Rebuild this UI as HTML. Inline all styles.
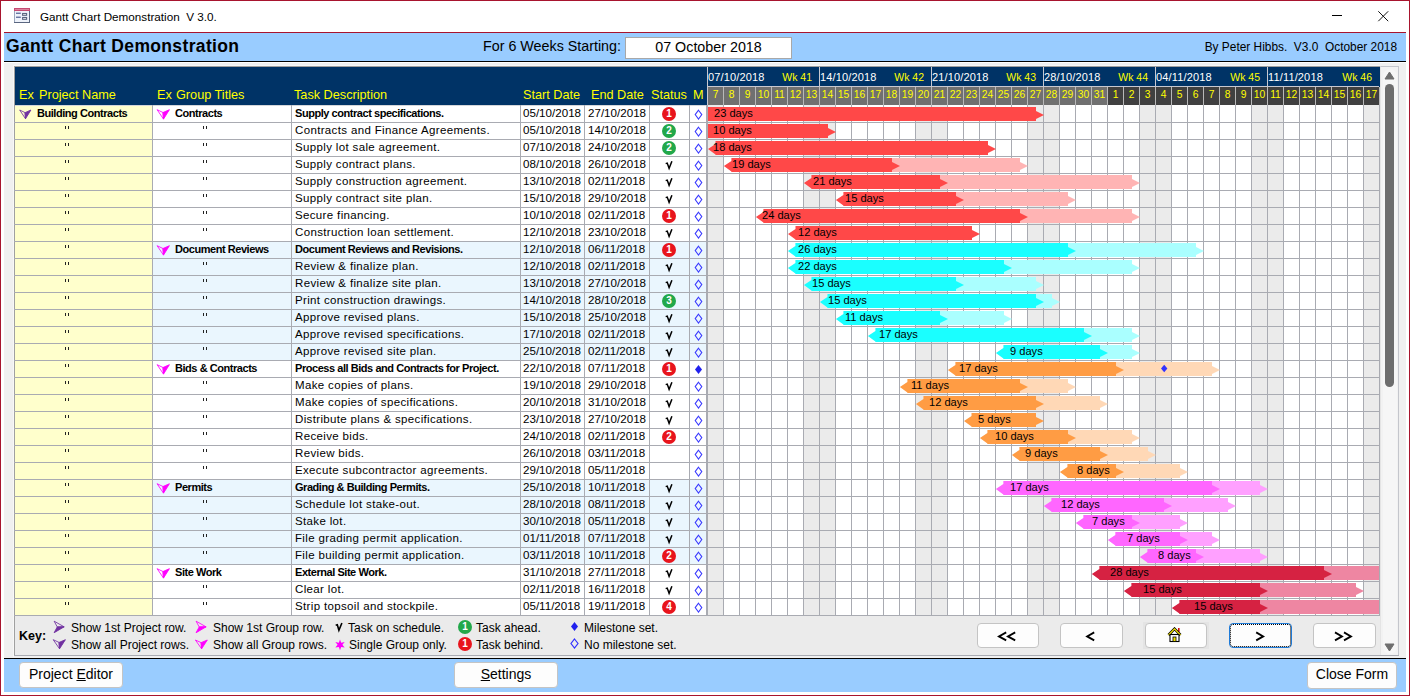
<!DOCTYPE html><html><head><meta charset="utf-8"><style>
html,body{margin:0;padding:0;}
body{width:1410px;height:696px;overflow:hidden;position:relative;font-family:"Liberation Sans",sans-serif;color:#000;}
body>div,body>svg{position:absolute;}
.ttl{font-size:11.7px;line-height:16px;color:#000;white-space:nowrap;}
.h1{font-size:17.5px;letter-spacing:0.35px;font-weight:bold;line-height:22px;white-space:nowrap;}
.hlbl,.hval,.hby{font-size:14.3px;line-height:18px;white-space:nowrap;}
.hby{font-size:11.9px;}
.th{font-size:12.7px;line-height:17px;color:#ffff00;white-space:nowrap;}
.wkd{font-size:11px;letter-spacing:0.15px;line-height:14px;color:#ffffff;white-space:nowrap;}
.wkn{font-size:10.5px;line-height:14px;color:#ffff00;white-space:nowrap;}
.dayn{font-size:10.3px;line-height:15px;color:#ffff00;white-space:nowrap;}
.cell{font-size:11.5px;letter-spacing:0.35px;line-height:16px;white-space:nowrap;}
.b{font-weight:bold;font-size:11px;letter-spacing:-0.45px;}
.dt{font-size:11.6px;letter-spacing:0;}
.key.b{font-size:12.5px;letter-spacing:0;}
.tick{font-weight:bold;font-size:11px;}
.blab{font-size:11.1px;line-height:16px;white-space:nowrap;color:#000;}
.key{font-size:12px;line-height:16px;white-space:nowrap;}
.circ{width:14px;height:14px;border-radius:7px;color:#fff;font-size:10px;font-weight:bold;line-height:14px;text-align:center;}
.btn{box-sizing:border-box;background:#fdfdfd;border:1px solid #c4c4c4;border-radius:4px;text-align:center;font-size:13px;line-height:22px;white-space:nowrap;}
</style></head><body>
<div style="left:0px;top:0px;width:1410px;height:696px;background:#ffffff;"></div>
<div style="left:0px;top:0px;width:1410px;height:1px;background:#a8142e;"></div>
<div style="left:0px;top:0px;width:1px;height:696px;background:#a8142e;"></div>
<div style="left:1409px;top:0px;width:1px;height:696px;background:#a8142e;"></div>
<div style="left:0px;top:695px;width:1410px;height:1px;background:#a8142e;"></div>
<svg style="left:14px;top:8px" width="16" height="15" viewBox="0 0 16 15">
<rect x="0.5" y="0.5" width="15" height="14" fill="#eef2fa" stroke="#5a6680"/>
<line x1="0.5" y1="3" x2="0.5" y2="14" stroke="#9aa6bc"/>
<rect x="0" y="0" width="16" height="3" fill="#c64a72"/>
<rect x="1" y="1" width="14" height="0.8" fill="#e090a8"/>
<rect x="2" y="4.6" width="4.8" height="1.3" fill="#5a6a9a"/><rect x="2" y="8.6" width="4.8" height="1.3" fill="#5a6a9a"/>
<rect x="8.6" y="5.5" width="4" height="1.8" fill="#fff" stroke="#5a6680" stroke-width="1.1"/><rect x="8.6" y="9.5" width="4" height="1.8" fill="#fff" stroke="#5a6680" stroke-width="1.1"/>
</svg>
<div class="ttl" style="left:40px;top:9px;">Gantt Chart Demonstration&nbsp; V 3.0.</div>
<div style="left:1332px;top:15px;width:10px;height:1px;background:#000;"></div>
<svg style="left:1377px;top:10px" width="13" height="13" viewBox="0 0 13 13"><path d="M1.3 1.3 L11.2 11.2 M11.2 1.3 L1.3 11.2" stroke="#111" stroke-width="1"/></svg>
<div style="left:4px;top:32px;width:1402px;height:1px;background:#a8142e;"></div>
<div style="left:4px;top:33px;width:1402px;height:28px;background:#99ccff;"></div>
<div style="left:4px;top:61px;width:1402px;height:1px;background:#000;"></div>
<div class="h1" style="left:6px;top:35px;">Gantt Chart Demonstration</div>
<div class="hlbl" style="left:483px;top:37px;">For 6 Weeks Starting:</div>
<div style="left:625px;top:37px;width:167px;height:22px;background:#fff;box-sizing:border-box;border:1px solid #a8a8a8;"></div>
<div class="hval" style="left:625px;top:38px;width:167px;text-align:center;">07 October 2018</div>
<div class="hby" style="left:1000px;top:38px;width:397px;text-align:right;">By Peter Hibbs.&nbsp; V3.0&nbsp; October 2018</div>
<div style="left:4px;top:62px;width:1402px;height:1px;background:#ffffff;"></div>
<div style="left:4px;top:63px;width:1402px;height:595px;background:#f0f0f0;"></div>
<div style="left:4px;top:658px;width:1402px;height:1px;background:#000;"></div>
<div style="left:4px;top:659px;width:1402px;height:33px;background:#99ccff;"></div>
<div style="left:13px;top:65px;width:1367px;height:1px;background:#f8f8f8;"></div>
<div style="left:13px;top:65px;width:1px;height:592px;background:#f8f8f8;"></div>
<div style="left:14px;top:66px;width:1366px;height:1px;background:#a0a0a0;"></div>
<div style="left:14px;top:66px;width:1px;height:590px;background:#a0a0a0;"></div>
<div style="left:15px;top:67px;width:692px;height:38px;background:#003366;"></div>
<div style="left:707px;top:67px;width:1px;height:38px;background:#c8c8d0;"></div>
<div style="left:708px;top:67px;width:671px;height:19px;background:#003366;"></div>
<div style="left:1379px;top:67px;width:2px;height:38px;background:#003366;"></div>
<div style="left:708px;top:86px;width:671px;height:1px;background:#c8c8d0;"></div>
<div style="left:708px;top:87px;width:15px;height:18px;background:#707070;"></div>
<div style="left:723px;top:87px;width:1px;height:18px;background:#b8b8b8;"></div>
<div class="dayn" style="left:708px;top:87px;width:15px;text-align:center;">7</div>
<div style="left:724px;top:87px;width:15px;height:18px;background:#707070;"></div>
<div style="left:739px;top:87px;width:1px;height:18px;background:#b8b8b8;"></div>
<div class="dayn" style="left:724px;top:87px;width:15px;text-align:center;">8</div>
<div style="left:740px;top:87px;width:15px;height:18px;background:#707070;"></div>
<div style="left:755px;top:87px;width:1px;height:18px;background:#b8b8b8;"></div>
<div class="dayn" style="left:740px;top:87px;width:15px;text-align:center;">9</div>
<div style="left:756px;top:87px;width:15px;height:18px;background:#707070;"></div>
<div style="left:771px;top:87px;width:1px;height:18px;background:#b8b8b8;"></div>
<div class="dayn" style="left:756px;top:87px;width:15px;text-align:center;">10</div>
<div style="left:772px;top:87px;width:15px;height:18px;background:#707070;"></div>
<div style="left:787px;top:87px;width:1px;height:18px;background:#b8b8b8;"></div>
<div class="dayn" style="left:772px;top:87px;width:15px;text-align:center;">11</div>
<div style="left:788px;top:87px;width:15px;height:18px;background:#707070;"></div>
<div style="left:803px;top:87px;width:1px;height:18px;background:#b8b8b8;"></div>
<div class="dayn" style="left:788px;top:87px;width:15px;text-align:center;">12</div>
<div style="left:804px;top:87px;width:15px;height:18px;background:#707070;"></div>
<div style="left:819px;top:87px;width:1px;height:18px;background:#b8b8b8;"></div>
<div class="dayn" style="left:804px;top:87px;width:15px;text-align:center;">13</div>
<div style="left:820px;top:87px;width:15px;height:18px;background:#707070;"></div>
<div style="left:835px;top:87px;width:1px;height:18px;background:#b8b8b8;"></div>
<div class="dayn" style="left:820px;top:87px;width:15px;text-align:center;">14</div>
<div style="left:836px;top:87px;width:15px;height:18px;background:#707070;"></div>
<div style="left:851px;top:87px;width:1px;height:18px;background:#b8b8b8;"></div>
<div class="dayn" style="left:836px;top:87px;width:15px;text-align:center;">15</div>
<div style="left:852px;top:87px;width:15px;height:18px;background:#707070;"></div>
<div style="left:867px;top:87px;width:1px;height:18px;background:#b8b8b8;"></div>
<div class="dayn" style="left:852px;top:87px;width:15px;text-align:center;">16</div>
<div style="left:868px;top:87px;width:15px;height:18px;background:#707070;"></div>
<div style="left:883px;top:87px;width:1px;height:18px;background:#b8b8b8;"></div>
<div class="dayn" style="left:868px;top:87px;width:15px;text-align:center;">17</div>
<div style="left:884px;top:87px;width:15px;height:18px;background:#707070;"></div>
<div style="left:899px;top:87px;width:1px;height:18px;background:#b8b8b8;"></div>
<div class="dayn" style="left:884px;top:87px;width:15px;text-align:center;">18</div>
<div style="left:900px;top:87px;width:15px;height:18px;background:#707070;"></div>
<div style="left:915px;top:87px;width:1px;height:18px;background:#b8b8b8;"></div>
<div class="dayn" style="left:900px;top:87px;width:15px;text-align:center;">19</div>
<div style="left:916px;top:87px;width:15px;height:18px;background:#707070;"></div>
<div style="left:931px;top:87px;width:1px;height:18px;background:#b8b8b8;"></div>
<div class="dayn" style="left:916px;top:87px;width:15px;text-align:center;">20</div>
<div style="left:932px;top:87px;width:15px;height:18px;background:#707070;"></div>
<div style="left:947px;top:87px;width:1px;height:18px;background:#b8b8b8;"></div>
<div class="dayn" style="left:932px;top:87px;width:15px;text-align:center;">21</div>
<div style="left:948px;top:87px;width:15px;height:18px;background:#707070;"></div>
<div style="left:963px;top:87px;width:1px;height:18px;background:#b8b8b8;"></div>
<div class="dayn" style="left:948px;top:87px;width:15px;text-align:center;">22</div>
<div style="left:964px;top:87px;width:15px;height:18px;background:#707070;"></div>
<div style="left:979px;top:87px;width:1px;height:18px;background:#b8b8b8;"></div>
<div class="dayn" style="left:964px;top:87px;width:15px;text-align:center;">23</div>
<div style="left:980px;top:87px;width:15px;height:18px;background:#707070;"></div>
<div style="left:995px;top:87px;width:1px;height:18px;background:#b8b8b8;"></div>
<div class="dayn" style="left:980px;top:87px;width:15px;text-align:center;">24</div>
<div style="left:996px;top:87px;width:15px;height:18px;background:#707070;"></div>
<div style="left:1011px;top:87px;width:1px;height:18px;background:#b8b8b8;"></div>
<div class="dayn" style="left:996px;top:87px;width:15px;text-align:center;">25</div>
<div style="left:1012px;top:87px;width:15px;height:18px;background:#707070;"></div>
<div style="left:1027px;top:87px;width:1px;height:18px;background:#b8b8b8;"></div>
<div class="dayn" style="left:1012px;top:87px;width:15px;text-align:center;">26</div>
<div style="left:1028px;top:87px;width:15px;height:18px;background:#707070;"></div>
<div style="left:1043px;top:87px;width:1px;height:18px;background:#b8b8b8;"></div>
<div class="dayn" style="left:1028px;top:87px;width:15px;text-align:center;">27</div>
<div style="left:1044px;top:87px;width:15px;height:18px;background:#707070;"></div>
<div style="left:1059px;top:87px;width:1px;height:18px;background:#b8b8b8;"></div>
<div class="dayn" style="left:1044px;top:87px;width:15px;text-align:center;">28</div>
<div style="left:1060px;top:87px;width:15px;height:18px;background:#707070;"></div>
<div style="left:1075px;top:87px;width:1px;height:18px;background:#b8b8b8;"></div>
<div class="dayn" style="left:1060px;top:87px;width:15px;text-align:center;">29</div>
<div style="left:1076px;top:87px;width:15px;height:18px;background:#707070;"></div>
<div style="left:1091px;top:87px;width:1px;height:18px;background:#b8b8b8;"></div>
<div class="dayn" style="left:1076px;top:87px;width:15px;text-align:center;">30</div>
<div style="left:1092px;top:87px;width:15px;height:18px;background:#707070;"></div>
<div style="left:1107px;top:87px;width:1px;height:18px;background:#b8b8b8;"></div>
<div class="dayn" style="left:1092px;top:87px;width:15px;text-align:center;">31</div>
<div style="left:1108px;top:87px;width:15px;height:18px;background:#404040;"></div>
<div style="left:1123px;top:87px;width:1px;height:18px;background:#b8b8b8;"></div>
<div class="dayn" style="left:1108px;top:87px;width:15px;text-align:center;">1</div>
<div style="left:1124px;top:87px;width:15px;height:18px;background:#404040;"></div>
<div style="left:1139px;top:87px;width:1px;height:18px;background:#b8b8b8;"></div>
<div class="dayn" style="left:1124px;top:87px;width:15px;text-align:center;">2</div>
<div style="left:1140px;top:87px;width:15px;height:18px;background:#404040;"></div>
<div style="left:1155px;top:87px;width:1px;height:18px;background:#b8b8b8;"></div>
<div class="dayn" style="left:1140px;top:87px;width:15px;text-align:center;">3</div>
<div style="left:1156px;top:87px;width:15px;height:18px;background:#404040;"></div>
<div style="left:1171px;top:87px;width:1px;height:18px;background:#b8b8b8;"></div>
<div class="dayn" style="left:1156px;top:87px;width:15px;text-align:center;">4</div>
<div style="left:1172px;top:87px;width:15px;height:18px;background:#404040;"></div>
<div style="left:1187px;top:87px;width:1px;height:18px;background:#b8b8b8;"></div>
<div class="dayn" style="left:1172px;top:87px;width:15px;text-align:center;">5</div>
<div style="left:1188px;top:87px;width:15px;height:18px;background:#404040;"></div>
<div style="left:1203px;top:87px;width:1px;height:18px;background:#b8b8b8;"></div>
<div class="dayn" style="left:1188px;top:87px;width:15px;text-align:center;">6</div>
<div style="left:1204px;top:87px;width:15px;height:18px;background:#404040;"></div>
<div style="left:1219px;top:87px;width:1px;height:18px;background:#b8b8b8;"></div>
<div class="dayn" style="left:1204px;top:87px;width:15px;text-align:center;">7</div>
<div style="left:1220px;top:87px;width:15px;height:18px;background:#404040;"></div>
<div style="left:1235px;top:87px;width:1px;height:18px;background:#b8b8b8;"></div>
<div class="dayn" style="left:1220px;top:87px;width:15px;text-align:center;">8</div>
<div style="left:1236px;top:87px;width:15px;height:18px;background:#404040;"></div>
<div style="left:1251px;top:87px;width:1px;height:18px;background:#b8b8b8;"></div>
<div class="dayn" style="left:1236px;top:87px;width:15px;text-align:center;">9</div>
<div style="left:1252px;top:87px;width:15px;height:18px;background:#404040;"></div>
<div style="left:1267px;top:87px;width:1px;height:18px;background:#b8b8b8;"></div>
<div class="dayn" style="left:1252px;top:87px;width:15px;text-align:center;">10</div>
<div style="left:1268px;top:87px;width:15px;height:18px;background:#404040;"></div>
<div style="left:1283px;top:87px;width:1px;height:18px;background:#b8b8b8;"></div>
<div class="dayn" style="left:1268px;top:87px;width:15px;text-align:center;">11</div>
<div style="left:1284px;top:87px;width:15px;height:18px;background:#404040;"></div>
<div style="left:1299px;top:87px;width:1px;height:18px;background:#b8b8b8;"></div>
<div class="dayn" style="left:1284px;top:87px;width:15px;text-align:center;">12</div>
<div style="left:1300px;top:87px;width:15px;height:18px;background:#404040;"></div>
<div style="left:1315px;top:87px;width:1px;height:18px;background:#b8b8b8;"></div>
<div class="dayn" style="left:1300px;top:87px;width:15px;text-align:center;">13</div>
<div style="left:1316px;top:87px;width:15px;height:18px;background:#404040;"></div>
<div style="left:1331px;top:87px;width:1px;height:18px;background:#b8b8b8;"></div>
<div class="dayn" style="left:1316px;top:87px;width:15px;text-align:center;">14</div>
<div style="left:1332px;top:87px;width:15px;height:18px;background:#404040;"></div>
<div style="left:1347px;top:87px;width:1px;height:18px;background:#b8b8b8;"></div>
<div class="dayn" style="left:1332px;top:87px;width:15px;text-align:center;">15</div>
<div style="left:1348px;top:87px;width:15px;height:18px;background:#404040;"></div>
<div style="left:1363px;top:87px;width:1px;height:18px;background:#b8b8b8;"></div>
<div class="dayn" style="left:1348px;top:87px;width:15px;text-align:center;">16</div>
<div style="left:1364px;top:87px;width:15px;height:18px;background:#404040;"></div>
<div style="left:1379px;top:87px;width:1px;height:18px;background:#b8b8b8;"></div>
<div class="dayn" style="left:1364px;top:87px;width:15px;text-align:center;">17</div>
<div class="wkd" style="left:708px;top:70px;">07/10/2018</div>
<div class="wkn" style="left:708px;top:70px;width:104px;text-align:right;">Wk 41</div>
<div style="left:819px;top:67px;width:1px;height:19px;background:#c8c8d0;"></div>
<div class="wkd" style="left:820px;top:70px;">14/10/2018</div>
<div class="wkn" style="left:820px;top:70px;width:104px;text-align:right;">Wk 42</div>
<div style="left:931px;top:67px;width:1px;height:19px;background:#c8c8d0;"></div>
<div class="wkd" style="left:932px;top:70px;">21/10/2018</div>
<div class="wkn" style="left:932px;top:70px;width:104px;text-align:right;">Wk 43</div>
<div style="left:1043px;top:67px;width:1px;height:19px;background:#c8c8d0;"></div>
<div class="wkd" style="left:1044px;top:70px;">28/10/2018</div>
<div class="wkn" style="left:1044px;top:70px;width:104px;text-align:right;">Wk 44</div>
<div style="left:1155px;top:67px;width:1px;height:19px;background:#c8c8d0;"></div>
<div class="wkd" style="left:1156px;top:70px;">04/11/2018</div>
<div class="wkn" style="left:1156px;top:70px;width:104px;text-align:right;">Wk 45</div>
<div style="left:1267px;top:67px;width:1px;height:19px;background:#c8c8d0;"></div>
<div class="wkd" style="left:1268px;top:70px;">11/11/2018</div>
<div class="wkn" style="left:1268px;top:70px;width:104px;text-align:right;">Wk 46</div>
<div class="th" style="left:19px;top:87px;">Ex</div>
<div class="th" style="left:39px;top:87px;">Project Name</div>
<div class="th" style="left:157px;top:87px;">Ex</div>
<div class="th" style="left:176px;top:87px;">Group Titles</div>
<div class="th" style="left:294px;top:87px;">Task Description</div>
<div class="th" style="left:523px;top:87px;">Start Date</div>
<div class="th" style="left:591px;top:87px;">End Date</div>
<div class="th" style="left:651px;top:87px;">Status</div>
<div class="th" style="left:693px;top:87px;">M</div>
<div style="left:15px;top:105px;width:137px;height:17px;background:#ffffcc;"></div>
<div style="left:153px;top:105px;width:553px;height:17px;background:#ffffff;"></div>
<div style="left:15px;top:122px;width:137px;height:17px;background:#ffffcc;"></div>
<div style="left:153px;top:122px;width:553px;height:17px;background:#ffffff;"></div>
<div style="left:15px;top:139px;width:137px;height:17px;background:#ffffcc;"></div>
<div style="left:153px;top:139px;width:553px;height:17px;background:#ffffff;"></div>
<div style="left:15px;top:156px;width:137px;height:17px;background:#ffffcc;"></div>
<div style="left:153px;top:156px;width:553px;height:17px;background:#ffffff;"></div>
<div style="left:15px;top:173px;width:137px;height:17px;background:#ffffcc;"></div>
<div style="left:153px;top:173px;width:553px;height:17px;background:#ffffff;"></div>
<div style="left:15px;top:190px;width:137px;height:17px;background:#ffffcc;"></div>
<div style="left:153px;top:190px;width:553px;height:17px;background:#ffffff;"></div>
<div style="left:15px;top:207px;width:137px;height:17px;background:#ffffcc;"></div>
<div style="left:153px;top:207px;width:553px;height:17px;background:#ffffff;"></div>
<div style="left:15px;top:224px;width:137px;height:17px;background:#ffffcc;"></div>
<div style="left:153px;top:224px;width:553px;height:17px;background:#ffffff;"></div>
<div style="left:15px;top:241px;width:137px;height:17px;background:#ffffcc;"></div>
<div style="left:153px;top:241px;width:553px;height:17px;background:#eaf6fe;"></div>
<div style="left:15px;top:258px;width:137px;height:17px;background:#ffffcc;"></div>
<div style="left:153px;top:258px;width:553px;height:17px;background:#eaf6fe;"></div>
<div style="left:15px;top:275px;width:137px;height:17px;background:#ffffcc;"></div>
<div style="left:153px;top:275px;width:553px;height:17px;background:#eaf6fe;"></div>
<div style="left:15px;top:292px;width:137px;height:17px;background:#ffffcc;"></div>
<div style="left:153px;top:292px;width:553px;height:17px;background:#eaf6fe;"></div>
<div style="left:15px;top:309px;width:137px;height:17px;background:#ffffcc;"></div>
<div style="left:153px;top:309px;width:553px;height:17px;background:#eaf6fe;"></div>
<div style="left:15px;top:326px;width:137px;height:17px;background:#ffffcc;"></div>
<div style="left:153px;top:326px;width:553px;height:17px;background:#eaf6fe;"></div>
<div style="left:15px;top:343px;width:137px;height:17px;background:#ffffcc;"></div>
<div style="left:153px;top:343px;width:553px;height:17px;background:#eaf6fe;"></div>
<div style="left:15px;top:360px;width:137px;height:17px;background:#ffffcc;"></div>
<div style="left:153px;top:360px;width:553px;height:17px;background:#ffffff;"></div>
<div style="left:15px;top:377px;width:137px;height:17px;background:#ffffcc;"></div>
<div style="left:153px;top:377px;width:553px;height:17px;background:#ffffff;"></div>
<div style="left:15px;top:394px;width:137px;height:17px;background:#ffffcc;"></div>
<div style="left:153px;top:394px;width:553px;height:17px;background:#ffffff;"></div>
<div style="left:15px;top:411px;width:137px;height:17px;background:#ffffcc;"></div>
<div style="left:153px;top:411px;width:553px;height:17px;background:#ffffff;"></div>
<div style="left:15px;top:428px;width:137px;height:17px;background:#ffffcc;"></div>
<div style="left:153px;top:428px;width:553px;height:17px;background:#ffffff;"></div>
<div style="left:15px;top:445px;width:137px;height:17px;background:#ffffcc;"></div>
<div style="left:153px;top:445px;width:553px;height:17px;background:#ffffff;"></div>
<div style="left:15px;top:462px;width:137px;height:17px;background:#ffffcc;"></div>
<div style="left:153px;top:462px;width:553px;height:17px;background:#ffffff;"></div>
<div style="left:15px;top:479px;width:137px;height:17px;background:#ffffcc;"></div>
<div style="left:153px;top:479px;width:553px;height:17px;background:#eaf6fe;"></div>
<div style="left:15px;top:496px;width:137px;height:17px;background:#ffffcc;"></div>
<div style="left:153px;top:496px;width:553px;height:17px;background:#eaf6fe;"></div>
<div style="left:15px;top:513px;width:137px;height:17px;background:#ffffcc;"></div>
<div style="left:153px;top:513px;width:553px;height:17px;background:#eaf6fe;"></div>
<div style="left:15px;top:530px;width:137px;height:17px;background:#ffffcc;"></div>
<div style="left:153px;top:530px;width:553px;height:17px;background:#eaf6fe;"></div>
<div style="left:15px;top:547px;width:137px;height:17px;background:#ffffcc;"></div>
<div style="left:153px;top:547px;width:553px;height:17px;background:#eaf6fe;"></div>
<div style="left:15px;top:564px;width:137px;height:17px;background:#ffffcc;"></div>
<div style="left:153px;top:564px;width:553px;height:17px;background:#ffffff;"></div>
<div style="left:15px;top:581px;width:137px;height:17px;background:#ffffcc;"></div>
<div style="left:153px;top:581px;width:553px;height:17px;background:#ffffff;"></div>
<div style="left:15px;top:598px;width:137px;height:17px;background:#ffffcc;"></div>
<div style="left:153px;top:598px;width:553px;height:17px;background:#ffffff;"></div>
<div style="left:15px;top:105px;width:692px;height:1px;background:#d4d6da;"></div>
<div style="left:708px;top:105px;width:671px;height:510px;background:#ffffff;"></div>
<div style="left:708px;top:105px;width:15px;height:510px;background:#ebebeb;"></div>
<div style="left:804px;top:105px;width:15px;height:510px;background:#ebebeb;"></div>
<div style="left:820px;top:105px;width:15px;height:510px;background:#ebebeb;"></div>
<div style="left:916px;top:105px;width:15px;height:510px;background:#ebebeb;"></div>
<div style="left:932px;top:105px;width:15px;height:510px;background:#ebebeb;"></div>
<div style="left:1028px;top:105px;width:15px;height:510px;background:#ebebeb;"></div>
<div style="left:1044px;top:105px;width:15px;height:510px;background:#ebebeb;"></div>
<div style="left:1140px;top:105px;width:15px;height:510px;background:#ebebeb;"></div>
<div style="left:1156px;top:105px;width:15px;height:510px;background:#ebebeb;"></div>
<div style="left:1252px;top:105px;width:15px;height:510px;background:#ebebeb;"></div>
<div style="left:1268px;top:105px;width:15px;height:510px;background:#ebebeb;"></div>
<div style="left:1364px;top:105px;width:15px;height:510px;background:#ebebeb;"></div>
<div style="left:14px;top:122px;width:1366px;height:1px;background:#a9abb2;"></div>
<div style="left:14px;top:139px;width:1366px;height:1px;background:#a9abb2;"></div>
<div style="left:14px;top:156px;width:1366px;height:1px;background:#a9abb2;"></div>
<div style="left:14px;top:173px;width:1366px;height:1px;background:#a9abb2;"></div>
<div style="left:14px;top:190px;width:1366px;height:1px;background:#a9abb2;"></div>
<div style="left:14px;top:207px;width:1366px;height:1px;background:#a9abb2;"></div>
<div style="left:14px;top:224px;width:1366px;height:1px;background:#a9abb2;"></div>
<div style="left:14px;top:241px;width:1366px;height:1px;background:#a9abb2;"></div>
<div style="left:14px;top:258px;width:1366px;height:1px;background:#a9abb2;"></div>
<div style="left:14px;top:275px;width:1366px;height:1px;background:#a9abb2;"></div>
<div style="left:14px;top:292px;width:1366px;height:1px;background:#a9abb2;"></div>
<div style="left:14px;top:309px;width:1366px;height:1px;background:#a9abb2;"></div>
<div style="left:14px;top:326px;width:1366px;height:1px;background:#a9abb2;"></div>
<div style="left:14px;top:343px;width:1366px;height:1px;background:#a9abb2;"></div>
<div style="left:14px;top:360px;width:1366px;height:1px;background:#a9abb2;"></div>
<div style="left:14px;top:377px;width:1366px;height:1px;background:#a9abb2;"></div>
<div style="left:14px;top:394px;width:1366px;height:1px;background:#a9abb2;"></div>
<div style="left:14px;top:411px;width:1366px;height:1px;background:#a9abb2;"></div>
<div style="left:14px;top:428px;width:1366px;height:1px;background:#a9abb2;"></div>
<div style="left:14px;top:445px;width:1366px;height:1px;background:#a9abb2;"></div>
<div style="left:14px;top:462px;width:1366px;height:1px;background:#a9abb2;"></div>
<div style="left:14px;top:479px;width:1366px;height:1px;background:#a9abb2;"></div>
<div style="left:14px;top:496px;width:1366px;height:1px;background:#a9abb2;"></div>
<div style="left:14px;top:513px;width:1366px;height:1px;background:#a9abb2;"></div>
<div style="left:14px;top:530px;width:1366px;height:1px;background:#a9abb2;"></div>
<div style="left:14px;top:547px;width:1366px;height:1px;background:#a9abb2;"></div>
<div style="left:14px;top:564px;width:1366px;height:1px;background:#a9abb2;"></div>
<div style="left:14px;top:581px;width:1366px;height:1px;background:#a9abb2;"></div>
<div style="left:14px;top:598px;width:1366px;height:1px;background:#a9abb2;"></div>
<div style="left:14px;top:615px;width:1366px;height:1px;background:#a9abb2;"></div>
<div style="left:152px;top:105px;width:1px;height:510px;background:#a9abb2;"></div>
<div style="left:291px;top:105px;width:1px;height:510px;background:#a9abb2;"></div>
<div style="left:520px;top:105px;width:1px;height:510px;background:#a9abb2;"></div>
<div style="left:584px;top:105px;width:1px;height:510px;background:#a9abb2;"></div>
<div style="left:649px;top:105px;width:1px;height:510px;background:#a9abb2;"></div>
<div style="left:689px;top:105px;width:1px;height:510px;background:#a9abb2;"></div>
<div style="left:706px;top:105px;width:2px;height:510px;background:#a9abb2;"></div>
<div style="left:723px;top:105px;width:1px;height:510px;background:#a9abb2;"></div>
<div style="left:739px;top:105px;width:1px;height:510px;background:#a9abb2;"></div>
<div style="left:755px;top:105px;width:1px;height:510px;background:#a9abb2;"></div>
<div style="left:771px;top:105px;width:1px;height:510px;background:#a9abb2;"></div>
<div style="left:787px;top:105px;width:1px;height:510px;background:#a9abb2;"></div>
<div style="left:803px;top:105px;width:1px;height:510px;background:#a9abb2;"></div>
<div style="left:819px;top:105px;width:1px;height:510px;background:#a9abb2;"></div>
<div style="left:835px;top:105px;width:1px;height:510px;background:#a9abb2;"></div>
<div style="left:851px;top:105px;width:1px;height:510px;background:#a9abb2;"></div>
<div style="left:867px;top:105px;width:1px;height:510px;background:#a9abb2;"></div>
<div style="left:883px;top:105px;width:1px;height:510px;background:#a9abb2;"></div>
<div style="left:899px;top:105px;width:1px;height:510px;background:#a9abb2;"></div>
<div style="left:915px;top:105px;width:1px;height:510px;background:#a9abb2;"></div>
<div style="left:931px;top:105px;width:1px;height:510px;background:#a9abb2;"></div>
<div style="left:947px;top:105px;width:1px;height:510px;background:#a9abb2;"></div>
<div style="left:963px;top:105px;width:1px;height:510px;background:#a9abb2;"></div>
<div style="left:979px;top:105px;width:1px;height:510px;background:#a9abb2;"></div>
<div style="left:995px;top:105px;width:1px;height:510px;background:#a9abb2;"></div>
<div style="left:1011px;top:105px;width:1px;height:510px;background:#a9abb2;"></div>
<div style="left:1027px;top:105px;width:1px;height:510px;background:#a9abb2;"></div>
<div style="left:1043px;top:105px;width:1px;height:510px;background:#a9abb2;"></div>
<div style="left:1059px;top:105px;width:1px;height:510px;background:#a9abb2;"></div>
<div style="left:1075px;top:105px;width:1px;height:510px;background:#a9abb2;"></div>
<div style="left:1091px;top:105px;width:1px;height:510px;background:#a9abb2;"></div>
<div style="left:1107px;top:105px;width:1px;height:510px;background:#a9abb2;"></div>
<div style="left:1123px;top:105px;width:1px;height:510px;background:#a9abb2;"></div>
<div style="left:1139px;top:105px;width:1px;height:510px;background:#a9abb2;"></div>
<div style="left:1155px;top:105px;width:1px;height:510px;background:#a9abb2;"></div>
<div style="left:1171px;top:105px;width:1px;height:510px;background:#a9abb2;"></div>
<div style="left:1187px;top:105px;width:1px;height:510px;background:#a9abb2;"></div>
<div style="left:1203px;top:105px;width:1px;height:510px;background:#a9abb2;"></div>
<div style="left:1219px;top:105px;width:1px;height:510px;background:#a9abb2;"></div>
<div style="left:1235px;top:105px;width:1px;height:510px;background:#a9abb2;"></div>
<div style="left:1251px;top:105px;width:1px;height:510px;background:#a9abb2;"></div>
<div style="left:1267px;top:105px;width:1px;height:510px;background:#a9abb2;"></div>
<div style="left:1283px;top:105px;width:1px;height:510px;background:#a9abb2;"></div>
<div style="left:1299px;top:105px;width:1px;height:510px;background:#a9abb2;"></div>
<div style="left:1315px;top:105px;width:1px;height:510px;background:#a9abb2;"></div>
<div style="left:1331px;top:105px;width:1px;height:510px;background:#a9abb2;"></div>
<div style="left:1347px;top:105px;width:1px;height:510px;background:#a9abb2;"></div>
<div style="left:1363px;top:105px;width:1px;height:510px;background:#a9abb2;"></div>
<div style="left:1379px;top:105px;width:1px;height:510px;background:#a9abb2;"></div>
<div class="cell b" style="left:37px;top:105px;">Building Contracts</div>
<div class="cell b" style="left:175px;top:105px;">Contracts</div>
<div class="cell b" style="left:295px;top:105px;">Supply contract specifications.</div>
<div class="cell dt" style="left:523px;top:105px;">05/10/2018</div>
<div class="cell dt" style="left:588px;top:105px;">27/10/2018</div>
<div class="circ" style="left:662px;top:107px;background:#e8141c">1</div>
<svg style="left:694px;top:109px" width="9" height="11" viewBox="0 0 9 11"><path d="M4.5 1.2 L7.8 5.6 L4.5 10 L1.2 5.6 Z" fill="none" stroke="#3a3aff" stroke-width="1.05"/></svg>
<div style="left:65px;top:126px;width:1px;height:3px;background:#222;"></div>
<div style="left:68px;top:126px;width:1px;height:3px;background:#222;"></div>
<div style="left:203px;top:126px;width:1px;height:3px;background:#222;"></div>
<div style="left:206px;top:126px;width:1px;height:3px;background:#222;"></div>
<div class="cell" style="left:295px;top:122px;">Contracts and Finance Agreements.</div>
<div class="cell dt" style="left:523px;top:122px;">05/10/2018</div>
<div class="cell dt" style="left:588px;top:122px;">14/10/2018</div>
<div class="circ" style="left:662px;top:124px;background:#22a84a">2</div>
<svg style="left:694px;top:126px" width="9" height="11" viewBox="0 0 9 11"><path d="M4.5 1.2 L7.8 5.6 L4.5 10 L1.2 5.6 Z" fill="none" stroke="#3a3aff" stroke-width="1.05"/></svg>
<div style="left:65px;top:143px;width:1px;height:3px;background:#222;"></div>
<div style="left:68px;top:143px;width:1px;height:3px;background:#222;"></div>
<div style="left:203px;top:143px;width:1px;height:3px;background:#222;"></div>
<div style="left:206px;top:143px;width:1px;height:3px;background:#222;"></div>
<div class="cell" style="left:295px;top:139px;">Supply lot sale agreement.</div>
<div class="cell dt" style="left:523px;top:139px;">07/10/2018</div>
<div class="cell dt" style="left:588px;top:139px;">24/10/2018</div>
<div class="circ" style="left:662px;top:141px;background:#22a84a">2</div>
<svg style="left:694px;top:143px" width="9" height="11" viewBox="0 0 9 11"><path d="M4.5 1.2 L7.8 5.6 L4.5 10 L1.2 5.6 Z" fill="none" stroke="#3a3aff" stroke-width="1.05"/></svg>
<div style="left:65px;top:160px;width:1px;height:3px;background:#222;"></div>
<div style="left:68px;top:160px;width:1px;height:3px;background:#222;"></div>
<div style="left:203px;top:160px;width:1px;height:3px;background:#222;"></div>
<div style="left:206px;top:160px;width:1px;height:3px;background:#222;"></div>
<div class="cell" style="left:295px;top:156px;">Supply contract plans.</div>
<div class="cell dt" style="left:523px;top:156px;">08/10/2018</div>
<div class="cell dt" style="left:588px;top:156px;">26/10/2018</div>
<svg style="left:694px;top:160px" width="9" height="11" viewBox="0 0 9 11"><path d="M4.5 1.2 L7.8 5.6 L4.5 10 L1.2 5.6 Z" fill="none" stroke="#3a3aff" stroke-width="1.05"/></svg>
<div style="left:65px;top:177px;width:1px;height:3px;background:#222;"></div>
<div style="left:68px;top:177px;width:1px;height:3px;background:#222;"></div>
<div style="left:203px;top:177px;width:1px;height:3px;background:#222;"></div>
<div style="left:206px;top:177px;width:1px;height:3px;background:#222;"></div>
<div class="cell" style="left:295px;top:173px;">Supply construction agreement.</div>
<div class="cell dt" style="left:523px;top:173px;">13/10/2018</div>
<div class="cell dt" style="left:588px;top:173px;">02/11/2018</div>
<svg style="left:694px;top:177px" width="9" height="11" viewBox="0 0 9 11"><path d="M4.5 1.2 L7.8 5.6 L4.5 10 L1.2 5.6 Z" fill="none" stroke="#3a3aff" stroke-width="1.05"/></svg>
<div style="left:65px;top:194px;width:1px;height:3px;background:#222;"></div>
<div style="left:68px;top:194px;width:1px;height:3px;background:#222;"></div>
<div style="left:203px;top:194px;width:1px;height:3px;background:#222;"></div>
<div style="left:206px;top:194px;width:1px;height:3px;background:#222;"></div>
<div class="cell" style="left:295px;top:190px;">Supply contract site plan.</div>
<div class="cell dt" style="left:523px;top:190px;">15/10/2018</div>
<div class="cell dt" style="left:588px;top:190px;">29/10/2018</div>
<svg style="left:694px;top:194px" width="9" height="11" viewBox="0 0 9 11"><path d="M4.5 1.2 L7.8 5.6 L4.5 10 L1.2 5.6 Z" fill="none" stroke="#3a3aff" stroke-width="1.05"/></svg>
<div style="left:65px;top:211px;width:1px;height:3px;background:#222;"></div>
<div style="left:68px;top:211px;width:1px;height:3px;background:#222;"></div>
<div style="left:203px;top:211px;width:1px;height:3px;background:#222;"></div>
<div style="left:206px;top:211px;width:1px;height:3px;background:#222;"></div>
<div class="cell" style="left:295px;top:207px;">Secure financing.</div>
<div class="cell dt" style="left:523px;top:207px;">10/10/2018</div>
<div class="cell dt" style="left:588px;top:207px;">02/11/2018</div>
<div class="circ" style="left:662px;top:209px;background:#e8141c">1</div>
<svg style="left:694px;top:211px" width="9" height="11" viewBox="0 0 9 11"><path d="M4.5 1.2 L7.8 5.6 L4.5 10 L1.2 5.6 Z" fill="none" stroke="#3a3aff" stroke-width="1.05"/></svg>
<div style="left:65px;top:228px;width:1px;height:3px;background:#222;"></div>
<div style="left:68px;top:228px;width:1px;height:3px;background:#222;"></div>
<div style="left:203px;top:228px;width:1px;height:3px;background:#222;"></div>
<div style="left:206px;top:228px;width:1px;height:3px;background:#222;"></div>
<div class="cell" style="left:295px;top:224px;">Construction loan settlement.</div>
<div class="cell dt" style="left:523px;top:224px;">12/10/2018</div>
<div class="cell dt" style="left:588px;top:224px;">23/10/2018</div>
<svg style="left:694px;top:228px" width="9" height="11" viewBox="0 0 9 11"><path d="M4.5 1.2 L7.8 5.6 L4.5 10 L1.2 5.6 Z" fill="none" stroke="#3a3aff" stroke-width="1.05"/></svg>
<div style="left:65px;top:245px;width:1px;height:3px;background:#222;"></div>
<div style="left:68px;top:245px;width:1px;height:3px;background:#222;"></div>
<div class="cell b" style="left:175px;top:241px;">Document Reviews</div>
<div class="cell b" style="left:295px;top:241px;">Document Reviews and Revisions.</div>
<div class="cell dt" style="left:523px;top:241px;">12/10/2018</div>
<div class="cell dt" style="left:588px;top:241px;">06/11/2018</div>
<div class="circ" style="left:662px;top:243px;background:#e8141c">1</div>
<svg style="left:694px;top:245px" width="9" height="11" viewBox="0 0 9 11"><path d="M4.5 1.2 L7.8 5.6 L4.5 10 L1.2 5.6 Z" fill="none" stroke="#3a3aff" stroke-width="1.05"/></svg>
<div style="left:65px;top:262px;width:1px;height:3px;background:#222;"></div>
<div style="left:68px;top:262px;width:1px;height:3px;background:#222;"></div>
<div style="left:203px;top:262px;width:1px;height:3px;background:#222;"></div>
<div style="left:206px;top:262px;width:1px;height:3px;background:#222;"></div>
<div class="cell" style="left:295px;top:258px;">Review &amp; finalize plan.</div>
<div class="cell dt" style="left:523px;top:258px;">12/10/2018</div>
<div class="cell dt" style="left:588px;top:258px;">02/11/2018</div>
<svg style="left:694px;top:262px" width="9" height="11" viewBox="0 0 9 11"><path d="M4.5 1.2 L7.8 5.6 L4.5 10 L1.2 5.6 Z" fill="none" stroke="#3a3aff" stroke-width="1.05"/></svg>
<div style="left:65px;top:279px;width:1px;height:3px;background:#222;"></div>
<div style="left:68px;top:279px;width:1px;height:3px;background:#222;"></div>
<div style="left:203px;top:279px;width:1px;height:3px;background:#222;"></div>
<div style="left:206px;top:279px;width:1px;height:3px;background:#222;"></div>
<div class="cell" style="left:295px;top:275px;">Review &amp; finalize site plan.</div>
<div class="cell dt" style="left:523px;top:275px;">13/10/2018</div>
<div class="cell dt" style="left:588px;top:275px;">27/10/2018</div>
<svg style="left:694px;top:279px" width="9" height="11" viewBox="0 0 9 11"><path d="M4.5 1.2 L7.8 5.6 L4.5 10 L1.2 5.6 Z" fill="none" stroke="#3a3aff" stroke-width="1.05"/></svg>
<div style="left:65px;top:296px;width:1px;height:3px;background:#222;"></div>
<div style="left:68px;top:296px;width:1px;height:3px;background:#222;"></div>
<div style="left:203px;top:296px;width:1px;height:3px;background:#222;"></div>
<div style="left:206px;top:296px;width:1px;height:3px;background:#222;"></div>
<div class="cell" style="left:295px;top:292px;">Print construction drawings.</div>
<div class="cell dt" style="left:523px;top:292px;">14/10/2018</div>
<div class="cell dt" style="left:588px;top:292px;">28/10/2018</div>
<div class="circ" style="left:662px;top:294px;background:#22a84a">3</div>
<svg style="left:694px;top:296px" width="9" height="11" viewBox="0 0 9 11"><path d="M4.5 1.2 L7.8 5.6 L4.5 10 L1.2 5.6 Z" fill="none" stroke="#3a3aff" stroke-width="1.05"/></svg>
<div style="left:65px;top:313px;width:1px;height:3px;background:#222;"></div>
<div style="left:68px;top:313px;width:1px;height:3px;background:#222;"></div>
<div style="left:203px;top:313px;width:1px;height:3px;background:#222;"></div>
<div style="left:206px;top:313px;width:1px;height:3px;background:#222;"></div>
<div class="cell" style="left:295px;top:309px;">Approve revised plans.</div>
<div class="cell dt" style="left:523px;top:309px;">15/10/2018</div>
<div class="cell dt" style="left:588px;top:309px;">25/10/2018</div>
<svg style="left:694px;top:313px" width="9" height="11" viewBox="0 0 9 11"><path d="M4.5 1.2 L7.8 5.6 L4.5 10 L1.2 5.6 Z" fill="none" stroke="#3a3aff" stroke-width="1.05"/></svg>
<div style="left:65px;top:330px;width:1px;height:3px;background:#222;"></div>
<div style="left:68px;top:330px;width:1px;height:3px;background:#222;"></div>
<div style="left:203px;top:330px;width:1px;height:3px;background:#222;"></div>
<div style="left:206px;top:330px;width:1px;height:3px;background:#222;"></div>
<div class="cell" style="left:295px;top:326px;">Approve revised specifications.</div>
<div class="cell dt" style="left:523px;top:326px;">17/10/2018</div>
<div class="cell dt" style="left:588px;top:326px;">02/11/2018</div>
<svg style="left:694px;top:330px" width="9" height="11" viewBox="0 0 9 11"><path d="M4.5 1.2 L7.8 5.6 L4.5 10 L1.2 5.6 Z" fill="none" stroke="#3a3aff" stroke-width="1.05"/></svg>
<div style="left:65px;top:347px;width:1px;height:3px;background:#222;"></div>
<div style="left:68px;top:347px;width:1px;height:3px;background:#222;"></div>
<div style="left:203px;top:347px;width:1px;height:3px;background:#222;"></div>
<div style="left:206px;top:347px;width:1px;height:3px;background:#222;"></div>
<div class="cell" style="left:295px;top:343px;">Approve revised site plan.</div>
<div class="cell dt" style="left:523px;top:343px;">25/10/2018</div>
<div class="cell dt" style="left:588px;top:343px;">02/11/2018</div>
<svg style="left:694px;top:347px" width="9" height="11" viewBox="0 0 9 11"><path d="M4.5 1.2 L7.8 5.6 L4.5 10 L1.2 5.6 Z" fill="none" stroke="#3a3aff" stroke-width="1.05"/></svg>
<div style="left:65px;top:364px;width:1px;height:3px;background:#222;"></div>
<div style="left:68px;top:364px;width:1px;height:3px;background:#222;"></div>
<div class="cell b" style="left:175px;top:360px;">Bids &amp; Contracts</div>
<div class="cell b" style="left:295px;top:360px;">Process all Bids and Contracts for Project.</div>
<div class="cell dt" style="left:523px;top:360px;">22/10/2018</div>
<div class="cell dt" style="left:588px;top:360px;">07/11/2018</div>
<div class="circ" style="left:662px;top:362px;background:#e8141c">1</div>
<svg style="left:694px;top:364px" width="9" height="11" viewBox="0 0 9 11"><path d="M4.5 1 L8 5.5 L4.5 10 L1 5.5 Z" fill="#2222ee"/></svg>
<div style="left:65px;top:381px;width:1px;height:3px;background:#222;"></div>
<div style="left:68px;top:381px;width:1px;height:3px;background:#222;"></div>
<div style="left:203px;top:381px;width:1px;height:3px;background:#222;"></div>
<div style="left:206px;top:381px;width:1px;height:3px;background:#222;"></div>
<div class="cell" style="left:295px;top:377px;">Make copies of plans.</div>
<div class="cell dt" style="left:523px;top:377px;">19/10/2018</div>
<div class="cell dt" style="left:588px;top:377px;">29/10/2018</div>
<svg style="left:694px;top:381px" width="9" height="11" viewBox="0 0 9 11"><path d="M4.5 1.2 L7.8 5.6 L4.5 10 L1.2 5.6 Z" fill="none" stroke="#3a3aff" stroke-width="1.05"/></svg>
<div style="left:65px;top:398px;width:1px;height:3px;background:#222;"></div>
<div style="left:68px;top:398px;width:1px;height:3px;background:#222;"></div>
<div style="left:203px;top:398px;width:1px;height:3px;background:#222;"></div>
<div style="left:206px;top:398px;width:1px;height:3px;background:#222;"></div>
<div class="cell" style="left:295px;top:394px;">Make copies of specifications.</div>
<div class="cell dt" style="left:523px;top:394px;">20/10/2018</div>
<div class="cell dt" style="left:588px;top:394px;">31/10/2018</div>
<svg style="left:694px;top:398px" width="9" height="11" viewBox="0 0 9 11"><path d="M4.5 1.2 L7.8 5.6 L4.5 10 L1.2 5.6 Z" fill="none" stroke="#3a3aff" stroke-width="1.05"/></svg>
<div style="left:65px;top:415px;width:1px;height:3px;background:#222;"></div>
<div style="left:68px;top:415px;width:1px;height:3px;background:#222;"></div>
<div style="left:203px;top:415px;width:1px;height:3px;background:#222;"></div>
<div style="left:206px;top:415px;width:1px;height:3px;background:#222;"></div>
<div class="cell" style="left:295px;top:411px;">Distribute plans &amp; specifications.</div>
<div class="cell dt" style="left:523px;top:411px;">23/10/2018</div>
<div class="cell dt" style="left:588px;top:411px;">27/10/2018</div>
<svg style="left:694px;top:415px" width="9" height="11" viewBox="0 0 9 11"><path d="M4.5 1.2 L7.8 5.6 L4.5 10 L1.2 5.6 Z" fill="none" stroke="#3a3aff" stroke-width="1.05"/></svg>
<div style="left:65px;top:432px;width:1px;height:3px;background:#222;"></div>
<div style="left:68px;top:432px;width:1px;height:3px;background:#222;"></div>
<div style="left:203px;top:432px;width:1px;height:3px;background:#222;"></div>
<div style="left:206px;top:432px;width:1px;height:3px;background:#222;"></div>
<div class="cell" style="left:295px;top:428px;">Receive bids.</div>
<div class="cell dt" style="left:523px;top:428px;">24/10/2018</div>
<div class="cell dt" style="left:588px;top:428px;">02/11/2018</div>
<div class="circ" style="left:662px;top:430px;background:#e8141c">2</div>
<svg style="left:694px;top:432px" width="9" height="11" viewBox="0 0 9 11"><path d="M4.5 1.2 L7.8 5.6 L4.5 10 L1.2 5.6 Z" fill="none" stroke="#3a3aff" stroke-width="1.05"/></svg>
<div style="left:65px;top:449px;width:1px;height:3px;background:#222;"></div>
<div style="left:68px;top:449px;width:1px;height:3px;background:#222;"></div>
<div style="left:203px;top:449px;width:1px;height:3px;background:#222;"></div>
<div style="left:206px;top:449px;width:1px;height:3px;background:#222;"></div>
<div class="cell" style="left:295px;top:445px;">Review bids.</div>
<div class="cell dt" style="left:523px;top:445px;">26/10/2018</div>
<div class="cell dt" style="left:588px;top:445px;">03/11/2018</div>
<svg style="left:694px;top:449px" width="9" height="11" viewBox="0 0 9 11"><path d="M4.5 1.2 L7.8 5.6 L4.5 10 L1.2 5.6 Z" fill="none" stroke="#3a3aff" stroke-width="1.05"/></svg>
<div style="left:65px;top:466px;width:1px;height:3px;background:#222;"></div>
<div style="left:68px;top:466px;width:1px;height:3px;background:#222;"></div>
<div style="left:203px;top:466px;width:1px;height:3px;background:#222;"></div>
<div style="left:206px;top:466px;width:1px;height:3px;background:#222;"></div>
<div class="cell" style="left:295px;top:462px;">Execute subcontractor agreements.</div>
<div class="cell dt" style="left:523px;top:462px;">29/10/2018</div>
<div class="cell dt" style="left:588px;top:462px;">05/11/2018</div>
<svg style="left:694px;top:466px" width="9" height="11" viewBox="0 0 9 11"><path d="M4.5 1.2 L7.8 5.6 L4.5 10 L1.2 5.6 Z" fill="none" stroke="#3a3aff" stroke-width="1.05"/></svg>
<div style="left:65px;top:483px;width:1px;height:3px;background:#222;"></div>
<div style="left:68px;top:483px;width:1px;height:3px;background:#222;"></div>
<div class="cell b" style="left:175px;top:479px;">Permits</div>
<div class="cell b" style="left:295px;top:479px;">Grading &amp; Building Permits.</div>
<div class="cell dt" style="left:523px;top:479px;">25/10/2018</div>
<div class="cell dt" style="left:588px;top:479px;">10/11/2018</div>
<svg style="left:694px;top:483px" width="9" height="11" viewBox="0 0 9 11"><path d="M4.5 1.2 L7.8 5.6 L4.5 10 L1.2 5.6 Z" fill="none" stroke="#3a3aff" stroke-width="1.05"/></svg>
<div style="left:65px;top:500px;width:1px;height:3px;background:#222;"></div>
<div style="left:68px;top:500px;width:1px;height:3px;background:#222;"></div>
<div style="left:203px;top:500px;width:1px;height:3px;background:#222;"></div>
<div style="left:206px;top:500px;width:1px;height:3px;background:#222;"></div>
<div class="cell" style="left:295px;top:496px;">Schedule lot stake-out.</div>
<div class="cell dt" style="left:523px;top:496px;">28/10/2018</div>
<div class="cell dt" style="left:588px;top:496px;">08/11/2018</div>
<svg style="left:694px;top:500px" width="9" height="11" viewBox="0 0 9 11"><path d="M4.5 1.2 L7.8 5.6 L4.5 10 L1.2 5.6 Z" fill="none" stroke="#3a3aff" stroke-width="1.05"/></svg>
<div style="left:65px;top:517px;width:1px;height:3px;background:#222;"></div>
<div style="left:68px;top:517px;width:1px;height:3px;background:#222;"></div>
<div style="left:203px;top:517px;width:1px;height:3px;background:#222;"></div>
<div style="left:206px;top:517px;width:1px;height:3px;background:#222;"></div>
<div class="cell" style="left:295px;top:513px;">Stake lot.</div>
<div class="cell dt" style="left:523px;top:513px;">30/10/2018</div>
<div class="cell dt" style="left:588px;top:513px;">05/11/2018</div>
<svg style="left:694px;top:517px" width="9" height="11" viewBox="0 0 9 11"><path d="M4.5 1.2 L7.8 5.6 L4.5 10 L1.2 5.6 Z" fill="none" stroke="#3a3aff" stroke-width="1.05"/></svg>
<div style="left:65px;top:534px;width:1px;height:3px;background:#222;"></div>
<div style="left:68px;top:534px;width:1px;height:3px;background:#222;"></div>
<div style="left:203px;top:534px;width:1px;height:3px;background:#222;"></div>
<div style="left:206px;top:534px;width:1px;height:3px;background:#222;"></div>
<div class="cell" style="left:295px;top:530px;">File grading permit application.</div>
<div class="cell dt" style="left:523px;top:530px;">01/11/2018</div>
<div class="cell dt" style="left:588px;top:530px;">07/11/2018</div>
<svg style="left:694px;top:534px" width="9" height="11" viewBox="0 0 9 11"><path d="M4.5 1.2 L7.8 5.6 L4.5 10 L1.2 5.6 Z" fill="none" stroke="#3a3aff" stroke-width="1.05"/></svg>
<div style="left:65px;top:551px;width:1px;height:3px;background:#222;"></div>
<div style="left:68px;top:551px;width:1px;height:3px;background:#222;"></div>
<div style="left:203px;top:551px;width:1px;height:3px;background:#222;"></div>
<div style="left:206px;top:551px;width:1px;height:3px;background:#222;"></div>
<div class="cell" style="left:295px;top:547px;">File building permit application.</div>
<div class="cell dt" style="left:523px;top:547px;">03/11/2018</div>
<div class="cell dt" style="left:588px;top:547px;">10/11/2018</div>
<div class="circ" style="left:662px;top:549px;background:#e8141c">2</div>
<svg style="left:694px;top:551px" width="9" height="11" viewBox="0 0 9 11"><path d="M4.5 1.2 L7.8 5.6 L4.5 10 L1.2 5.6 Z" fill="none" stroke="#3a3aff" stroke-width="1.05"/></svg>
<div style="left:65px;top:568px;width:1px;height:3px;background:#222;"></div>
<div style="left:68px;top:568px;width:1px;height:3px;background:#222;"></div>
<div class="cell b" style="left:175px;top:564px;">Site Work</div>
<div class="cell b" style="left:295px;top:564px;">External Site Work.</div>
<div class="cell dt" style="left:523px;top:564px;">31/10/2018</div>
<div class="cell dt" style="left:588px;top:564px;">27/11/2018</div>
<svg style="left:694px;top:568px" width="9" height="11" viewBox="0 0 9 11"><path d="M4.5 1.2 L7.8 5.6 L4.5 10 L1.2 5.6 Z" fill="none" stroke="#3a3aff" stroke-width="1.05"/></svg>
<div style="left:65px;top:585px;width:1px;height:3px;background:#222;"></div>
<div style="left:68px;top:585px;width:1px;height:3px;background:#222;"></div>
<div style="left:203px;top:585px;width:1px;height:3px;background:#222;"></div>
<div style="left:206px;top:585px;width:1px;height:3px;background:#222;"></div>
<div class="cell" style="left:295px;top:581px;">Clear lot.</div>
<div class="cell dt" style="left:523px;top:581px;">02/11/2018</div>
<div class="cell dt" style="left:588px;top:581px;">16/11/2018</div>
<svg style="left:694px;top:585px" width="9" height="11" viewBox="0 0 9 11"><path d="M4.5 1.2 L7.8 5.6 L4.5 10 L1.2 5.6 Z" fill="none" stroke="#3a3aff" stroke-width="1.05"/></svg>
<div style="left:65px;top:602px;width:1px;height:3px;background:#222;"></div>
<div style="left:68px;top:602px;width:1px;height:3px;background:#222;"></div>
<div style="left:203px;top:602px;width:1px;height:3px;background:#222;"></div>
<div style="left:206px;top:602px;width:1px;height:3px;background:#222;"></div>
<div class="cell" style="left:295px;top:598px;">Strip topsoil and stockpile.</div>
<div class="cell dt" style="left:523px;top:598px;">05/11/2018</div>
<div class="cell dt" style="left:588px;top:598px;">19/11/2018</div>
<div class="circ" style="left:662px;top:600px;background:#e8141c">4</div>
<svg style="left:694px;top:602px" width="9" height="11" viewBox="0 0 9 11"><path d="M4.5 1.2 L7.8 5.6 L4.5 10 L1.2 5.6 Z" fill="none" stroke="#3a3aff" stroke-width="1.05"/></svg>
<svg style="left:0;top:0" width="1410" height="696" viewBox="0 0 1410 696"><path d="M708.0 107.0 L1036.0 107.0 L1036.0 111.0 L1044.0 115.0 L1036.0 119.0 L1036.0 121.0 L708.0 121.0 Z" fill="#ff4848"/><path d="M708.0 124.0 L828.0 124.0 L828.0 128.0 L836.0 132.0 L828.0 136.0 L828.0 138.0 L708.0 138.0 Z" fill="#ff4848"/><path d="M715.5 141.0 L988.0 141.0 L988.0 145.0 L996.0 149.0 L988.0 153.0 L988.0 155.0 L715.5 155.0 L715.5 154.5 L708.0 149.0 L715.5 144.0 Z" fill="#ff4848"/><path d="M731.5 158.0 L1020.0 158.0 L1020.0 162.0 L1028.0 166.0 L1020.0 170.0 L1020.0 172.0 L731.5 172.0 L731.5 171.5 L724.0 166.0 L731.5 161.0 Z" fill="#ffb4b4"/><path d="M731.5 158.0 L892.0 158.0 L892.0 162.0 L900.0 166.0 L892.0 170.0 L892.0 172.0 L731.5 172.0 L731.5 171.5 L724.0 166.0 L731.5 161.0 Z" fill="#ff4848"/><path d="M811.5 175.0 L1132.0 175.0 L1132.0 179.0 L1140.0 183.0 L1132.0 187.0 L1132.0 189.0 L811.5 189.0 L811.5 188.5 L804.0 183.0 L811.5 178.0 Z" fill="#ffb4b4"/><path d="M811.5 175.0 L940.0 175.0 L940.0 179.0 L948.0 183.0 L940.0 187.0 L940.0 189.0 L811.5 189.0 L811.5 188.5 L804.0 183.0 L811.5 178.0 Z" fill="#ff4848"/><path d="M843.5 192.0 L1068.0 192.0 L1068.0 196.0 L1076.0 200.0 L1068.0 204.0 L1068.0 206.0 L843.5 206.0 L843.5 205.5 L836.0 200.0 L843.5 195.0 Z" fill="#ffb4b4"/><path d="M843.5 192.0 L956.0 192.0 L956.0 196.0 L964.0 200.0 L956.0 204.0 L956.0 206.0 L843.5 206.0 L843.5 205.5 L836.0 200.0 L843.5 195.0 Z" fill="#ff4848"/><path d="M763.5 209.0 L1132.0 209.0 L1132.0 213.0 L1140.0 217.0 L1132.0 221.0 L1132.0 223.0 L763.5 223.0 L763.5 222.5 L756.0 217.0 L763.5 212.0 Z" fill="#ffb4b4"/><path d="M763.5 209.0 L1020.0 209.0 L1020.0 213.0 L1028.0 217.0 L1020.0 221.0 L1020.0 223.0 L763.5 223.0 L763.5 222.5 L756.0 217.0 L763.5 212.0 Z" fill="#ff4848"/><path d="M795.5 226.0 L972.0 226.0 L972.0 230.0 L980.0 234.0 L972.0 238.0 L972.0 240.0 L795.5 240.0 L795.5 239.5 L788.0 234.0 L795.5 229.0 Z" fill="#ff4848"/><path d="M795.5 243.0 L1196.0 243.0 L1196.0 247.0 L1204.0 251.0 L1196.0 255.0 L1196.0 257.0 L795.5 257.0 L795.5 256.5 L788.0 251.0 L795.5 246.0 Z" fill="#aaffff"/><path d="M795.5 243.0 L1068.0 243.0 L1068.0 247.0 L1076.0 251.0 L1068.0 255.0 L1068.0 257.0 L795.5 257.0 L795.5 256.5 L788.0 251.0 L795.5 246.0 Z" fill="#1affff"/><path d="M795.5 260.0 L1132.0 260.0 L1132.0 264.0 L1140.0 268.0 L1132.0 272.0 L1132.0 274.0 L795.5 274.0 L795.5 273.5 L788.0 268.0 L795.5 263.0 Z" fill="#aaffff"/><path d="M795.5 260.0 L1004.0 260.0 L1004.0 264.0 L1012.0 268.0 L1004.0 272.0 L1004.0 274.0 L795.5 274.0 L795.5 273.5 L788.0 268.0 L795.5 263.0 Z" fill="#1affff"/><path d="M811.5 277.0 L1036.0 277.0 L1036.0 281.0 L1044.0 285.0 L1036.0 289.0 L1036.0 291.0 L811.5 291.0 L811.5 290.5 L804.0 285.0 L811.5 280.0 Z" fill="#aaffff"/><path d="M811.5 277.0 L956.0 277.0 L956.0 281.0 L964.0 285.0 L956.0 289.0 L956.0 291.0 L811.5 291.0 L811.5 290.5 L804.0 285.0 L811.5 280.0 Z" fill="#1affff"/><path d="M827.5 294.0 L1052.0 294.0 L1052.0 298.0 L1060.0 302.0 L1052.0 306.0 L1052.0 308.0 L827.5 308.0 L827.5 307.5 L820.0 302.0 L827.5 297.0 Z" fill="#aaffff"/><path d="M827.5 294.0 L1036.0 294.0 L1036.0 298.0 L1044.0 302.0 L1036.0 306.0 L1036.0 308.0 L827.5 308.0 L827.5 307.5 L820.0 302.0 L827.5 297.0 Z" fill="#1affff"/><path d="M843.5 311.0 L1004.0 311.0 L1004.0 315.0 L1012.0 319.0 L1004.0 323.0 L1004.0 325.0 L843.5 325.0 L843.5 324.5 L836.0 319.0 L843.5 314.0 Z" fill="#aaffff"/><path d="M843.5 311.0 L940.0 311.0 L940.0 315.0 L948.0 319.0 L940.0 323.0 L940.0 325.0 L843.5 325.0 L843.5 324.5 L836.0 319.0 L843.5 314.0 Z" fill="#1affff"/><path d="M875.5 328.0 L1132.0 328.0 L1132.0 332.0 L1140.0 336.0 L1132.0 340.0 L1132.0 342.0 L875.5 342.0 L875.5 341.5 L868.0 336.0 L875.5 331.0 Z" fill="#aaffff"/><path d="M875.5 328.0 L1084.0 328.0 L1084.0 332.0 L1092.0 336.0 L1084.0 340.0 L1084.0 342.0 L875.5 342.0 L875.5 341.5 L868.0 336.0 L875.5 331.0 Z" fill="#1affff"/><path d="M1003.5 345.0 L1132.0 345.0 L1132.0 349.0 L1140.0 353.0 L1132.0 357.0 L1132.0 359.0 L1003.5 359.0 L1003.5 358.5 L996.0 353.0 L1003.5 348.0 Z" fill="#aaffff"/><path d="M1003.5 345.0 L1100.0 345.0 L1100.0 349.0 L1108.0 353.0 L1100.0 357.0 L1100.0 359.0 L1003.5 359.0 L1003.5 358.5 L996.0 353.0 L1003.5 348.0 Z" fill="#1affff"/><path d="M955.5 362.0 L1212.0 362.0 L1212.0 366.0 L1220.0 370.0 L1212.0 374.0 L1212.0 376.0 L955.5 376.0 L955.5 375.5 L948.0 370.0 L955.5 365.0 Z" fill="#ffd8b6"/><path d="M955.5 362.0 L1116.0 362.0 L1116.0 366.0 L1124.0 370.0 L1116.0 374.0 L1116.0 376.0 L955.5 376.0 L955.5 375.5 L948.0 370.0 L955.5 365.0 Z" fill="#ff9c44"/><path d="M1164.2 364.8 L1167.4 368.5 L1164.2 372.2 L1161.0 368.5 Z" fill="#3333ff"/><path d="M907.5 379.0 L1068.0 379.0 L1068.0 383.0 L1076.0 387.0 L1068.0 391.0 L1068.0 393.0 L907.5 393.0 L907.5 392.5 L900.0 387.0 L907.5 382.0 Z" fill="#ffd8b6"/><path d="M907.5 379.0 L1020.0 379.0 L1020.0 383.0 L1028.0 387.0 L1020.0 391.0 L1020.0 393.0 L907.5 393.0 L907.5 392.5 L900.0 387.0 L907.5 382.0 Z" fill="#ff9c44"/><path d="M923.5 396.0 L1100.0 396.0 L1100.0 400.0 L1108.0 404.0 L1100.0 408.0 L1100.0 410.0 L923.5 410.0 L923.5 409.5 L916.0 404.0 L923.5 399.0 Z" fill="#ffd8b6"/><path d="M923.5 396.0 L1036.0 396.0 L1036.0 400.0 L1044.0 404.0 L1036.0 408.0 L1036.0 410.0 L923.5 410.0 L923.5 409.5 L916.0 404.0 L923.5 399.0 Z" fill="#ff9c44"/><path d="M971.5 413.0 L1036.0 413.0 L1036.0 417.0 L1044.0 421.0 L1036.0 425.0 L1036.0 427.0 L971.5 427.0 L971.5 426.5 L964.0 421.0 L971.5 416.0 Z" fill="#ff9c44"/><path d="M987.5 430.0 L1132.0 430.0 L1132.0 434.0 L1140.0 438.0 L1132.0 442.0 L1132.0 444.0 L987.5 444.0 L987.5 443.5 L980.0 438.0 L987.5 433.0 Z" fill="#ffd8b6"/><path d="M987.5 430.0 L1068.0 430.0 L1068.0 434.0 L1076.0 438.0 L1068.0 442.0 L1068.0 444.0 L987.5 444.0 L987.5 443.5 L980.0 438.0 L987.5 433.0 Z" fill="#ff9c44"/><path d="M1019.5 447.0 L1148.0 447.0 L1148.0 451.0 L1156.0 455.0 L1148.0 459.0 L1148.0 461.0 L1019.5 461.0 L1019.5 460.5 L1012.0 455.0 L1019.5 450.0 Z" fill="#ffd8b6"/><path d="M1019.5 447.0 L1100.0 447.0 L1100.0 451.0 L1108.0 455.0 L1100.0 459.0 L1100.0 461.0 L1019.5 461.0 L1019.5 460.5 L1012.0 455.0 L1019.5 450.0 Z" fill="#ff9c44"/><path d="M1067.5 464.0 L1180.0 464.0 L1180.0 468.0 L1188.0 472.0 L1180.0 476.0 L1180.0 478.0 L1067.5 478.0 L1067.5 477.5 L1060.0 472.0 L1067.5 467.0 Z" fill="#ffd8b6"/><path d="M1067.5 464.0 L1116.0 464.0 L1116.0 468.0 L1124.0 472.0 L1116.0 476.0 L1116.0 478.0 L1067.5 478.0 L1067.5 477.5 L1060.0 472.0 L1067.5 467.0 Z" fill="#ff9c44"/><path d="M1003.5 481.0 L1260.0 481.0 L1260.0 485.0 L1268.0 489.0 L1260.0 493.0 L1260.0 495.0 L1003.5 495.0 L1003.5 494.5 L996.0 489.0 L1003.5 484.0 Z" fill="#ffa0ff"/><path d="M1003.5 481.0 L1212.0 481.0 L1212.0 485.0 L1220.0 489.0 L1212.0 493.0 L1212.0 495.0 L1003.5 495.0 L1003.5 494.5 L996.0 489.0 L1003.5 484.0 Z" fill="#ff66ff"/><path d="M1051.5 498.0 L1228.0 498.0 L1228.0 502.0 L1236.0 506.0 L1228.0 510.0 L1228.0 512.0 L1051.5 512.0 L1051.5 511.5 L1044.0 506.0 L1051.5 501.0 Z" fill="#ffa0ff"/><path d="M1051.5 498.0 L1164.0 498.0 L1164.0 502.0 L1172.0 506.0 L1164.0 510.0 L1164.0 512.0 L1051.5 512.0 L1051.5 511.5 L1044.0 506.0 L1051.5 501.0 Z" fill="#ff66ff"/><path d="M1083.5 515.0 L1180.0 515.0 L1180.0 519.0 L1188.0 523.0 L1180.0 527.0 L1180.0 529.0 L1083.5 529.0 L1083.5 528.5 L1076.0 523.0 L1083.5 518.0 Z" fill="#ffa0ff"/><path d="M1083.5 515.0 L1132.0 515.0 L1132.0 519.0 L1140.0 523.0 L1132.0 527.0 L1132.0 529.0 L1083.5 529.0 L1083.5 528.5 L1076.0 523.0 L1083.5 518.0 Z" fill="#ff66ff"/><path d="M1115.5 532.0 L1212.0 532.0 L1212.0 536.0 L1220.0 540.0 L1212.0 544.0 L1212.0 546.0 L1115.5 546.0 L1115.5 545.5 L1108.0 540.0 L1115.5 535.0 Z" fill="#ffa0ff"/><path d="M1115.5 532.0 L1180.0 532.0 L1180.0 536.0 L1188.0 540.0 L1180.0 544.0 L1180.0 546.0 L1115.5 546.0 L1115.5 545.5 L1108.0 540.0 L1115.5 535.0 Z" fill="#ff66ff"/><path d="M1147.5 549.0 L1260.0 549.0 L1260.0 553.0 L1268.0 557.0 L1260.0 561.0 L1260.0 563.0 L1147.5 563.0 L1147.5 562.5 L1140.0 557.0 L1147.5 552.0 Z" fill="#ffa0ff"/><path d="M1147.5 549.0 L1196.0 549.0 L1196.0 553.0 L1204.0 557.0 L1196.0 561.0 L1196.0 563.0 L1147.5 563.0 L1147.5 562.5 L1140.0 557.0 L1147.5 552.0 Z" fill="#ff66ff"/><path d="M1099.5 566.0 L1379.0 566.0 L1379.0 580.0 L1099.5 580.0 L1099.5 579.5 L1092.0 574.0 L1099.5 569.0 Z" fill="#ee86a2"/><path d="M1099.5 566.0 L1324.0 566.0 L1324.0 570.0 L1332.0 574.0 L1324.0 578.0 L1324.0 580.0 L1099.5 580.0 L1099.5 579.5 L1092.0 574.0 L1099.5 569.0 Z" fill="#d62242"/><path d="M1131.5 583.0 L1356.0 583.0 L1356.0 587.0 L1364.0 591.0 L1356.0 595.0 L1356.0 597.0 L1131.5 597.0 L1131.5 596.5 L1124.0 591.0 L1131.5 586.0 Z" fill="#ee86a2"/><path d="M1131.5 583.0 L1260.0 583.0 L1260.0 587.0 L1268.0 591.0 L1260.0 595.0 L1260.0 597.0 L1131.5 597.0 L1131.5 596.5 L1124.0 591.0 L1131.5 586.0 Z" fill="#d62242"/><path d="M1179.5 600.0 L1379.0 600.0 L1379.0 614.0 L1179.5 614.0 L1179.5 613.5 L1172.0 608.0 L1179.5 603.0 Z" fill="#ee86a2"/><path d="M1179.5 600.0 L1260.0 600.0 L1260.0 604.0 L1268.0 608.0 L1260.0 612.0 L1260.0 614.0 L1179.5 614.0 L1179.5 613.5 L1172.0 608.0 L1179.5 603.0 Z" fill="#d62242"/></svg>
<div class="blab" style="left:714px;top:105px;">23 days</div>
<div class="blab" style="left:713px;top:122px;">10 days</div>
<div class="blab" style="left:713px;top:139px;">18 days</div>
<div class="blab" style="left:732px;top:156px;">19 days</div>
<div class="blab" style="left:813px;top:173px;">21 days</div>
<div class="blab" style="left:845px;top:190px;">15 days</div>
<div class="blab" style="left:762px;top:207px;">24 days</div>
<div class="blab" style="left:798px;top:224px;">12 days</div>
<div class="blab" style="left:798px;top:241px;">26 days</div>
<div class="blab" style="left:798px;top:258px;">22 days</div>
<div class="blab" style="left:812px;top:275px;">15 days</div>
<div class="blab" style="left:828px;top:292px;">15 days</div>
<div class="blab" style="left:845px;top:309px;">11 days</div>
<div class="blab" style="left:879px;top:326px;">17 days</div>
<div class="blab" style="left:1010px;top:343px;">9 days</div>
<div class="blab" style="left:959px;top:360px;">17 days</div>
<div class="blab" style="left:911px;top:377px;">11 days</div>
<div class="blab" style="left:929px;top:394px;">12 days</div>
<div class="blab" style="left:978px;top:411px;">5 days</div>
<div class="blab" style="left:995px;top:428px;">10 days</div>
<div class="blab" style="left:1025px;top:445px;">9 days</div>
<div class="blab" style="left:1077px;top:462px;">8 days</div>
<div class="blab" style="left:1010px;top:479px;">17 days</div>
<div class="blab" style="left:1061px;top:496px;">12 days</div>
<div class="blab" style="left:1092px;top:513px;">7 days</div>
<div class="blab" style="left:1127px;top:530px;">7 days</div>
<div class="blab" style="left:1158px;top:547px;">8 days</div>
<div class="blab" style="left:1110px;top:564px;">28 days</div>
<div class="blab" style="left:1143px;top:581px;">15 days</div>
<div class="blab" style="left:1194px;top:598px;">15 days</div>
<div style="left:1380px;top:66px;width:19px;height:590px;background:#f2f2f2;box-sizing:border-box;border:1px solid #c4c6cc;border-left:1px solid #e4e4e4;border-bottom:none;"></div>
<div style="left:1383px;top:69px;width:14px;height:585px;background:#f6f6f6;border-radius:7px;"></div>
<svg style="left:1384px;top:71px" width="11" height="9" viewBox="0 0 11 9"><path d="M5.5 1 L10 8 L1 8 Z" fill="#6e6e6e" stroke="#6e6e6e" stroke-linejoin="round" stroke-width="1"/></svg>
<div style="left:1385px;top:84px;width:9px;height:303px;background:#6d6d6d;border-radius:4.5px;"></div>
<svg style="left:1384px;top:642.5px" width="11" height="9" viewBox="0 0 11 9"><path d="M5.5 8 L10 1 L1 1 Z" fill="#6e6e6e" stroke="#6e6e6e" stroke-linejoin="round" stroke-width="1"/></svg>
<div style="left:15px;top:616px;width:1365px;height:39px;background:#ebebeb;"></div>
<div style="left:14px;top:615px;width:1366px;height:1px;background:#a9abb2;"></div>
<div style="left:14px;top:655px;width:1385px;height:1px;background:#a9abb2;"></div>
<div class="key b" style="left:19px;top:628px;">Key:</div>
<div class="key" style="left:71px;top:620px;">Show 1st Project row.</div>
<div class="key" style="left:71px;top:637px;">Show all Project rows.</div>
<div class="key" style="left:213px;top:620px;">Show 1st Group row.</div>
<div class="key" style="left:213px;top:637px;">Show all Group rows.</div>
<div class="key" style="left:348px;top:620px;">Task on schedule.</div>
<div class="key" style="left:349px;top:637px;">Single Group only.</div>
<div class="circ" style="left:458px;top:620px;background:#22a84a">1</div>
<div class="circ" style="left:458px;top:637px;background:#e8141c">1</div>
<div class="key" style="left:476px;top:620px;">Task ahead.</div>
<div class="key" style="left:476px;top:637px;">Task behind.</div>
<svg style="left:570px;top:621px" width="9" height="11" viewBox="0 0 9 11"><path d="M4.5 1 L8 5.5 L4.5 10 L1 5.5 Z" fill="#2222ee"/></svg>
<svg style="left:570px;top:638px" width="9" height="11" viewBox="0 0 9 11"><path d="M4.5 1 L8 5.5 L4.5 10 L1 5.5 Z" fill="none" stroke="#3030ff" stroke-width="1.2"/></svg>
<div class="key" style="left:584px;top:620px;">Milestone set.</div>
<div class="key" style="left:584px;top:637px;">No milestone set.</div>
<div class="btn" style="left:977px;top:623px;width:62px;height:25px;"></div>
<div class="btn" style="left:1060px;top:623px;width:63px;height:25px;"></div>
<div style="left:1143px;top:622px;width:66px;height:27px;background:#e4e4e4;"></div>
<div class="btn" style="left:1145px;top:623px;width:62px;height:25px;"></div>
<svg style="left:1167px;top:627px" width="16" height="16" viewBox="0 0 16 16">
<rect x="11" y="1" width="1.6" height="4" fill="#d01010"/>
<path d="M1.5 8 L7.5 1.8 L13.5 8" fill="none" stroke="#000" stroke-width="2.6"/>
<path d="M1.5 8 L7.5 1.8 L13.5 8" fill="none" stroke="#f4e400" stroke-width="1.2"/>
<rect x="3" y="7.5" width="9" height="7" fill="#fff" stroke="#000" stroke-width="1.1"/>
<rect x="6" y="10" width="3" height="4.5" fill="#f4e400" stroke="#000" stroke-width="0.8"/>
</svg>
<div class="btn" style="left:1229px;top:623px;width:63px;height:25px;border:1px solid #1e7ad8;"></div>
<div style="left:1230px;top:624px;width:61px;height:23px;box-sizing:border-box;border:1px dotted #000;border-radius:3px;"></div>
<div class="btn" style="left:1313px;top:623px;width:63px;height:25px;"></div>
<div class="btn" style="left:19px;top:662px;width:104px;height:26px;font-size:14px;">Project <u>E</u>ditor</div>
<div class="btn" style="left:454px;top:662px;width:104px;height:26px;font-size:14px;"><u>S</u>ettings</div>
<div class="btn" style="left:1307px;top:662px;width:90px;height:27px;font-size:14px;">Close Form</div>
<svg style="left:0;top:0" width="1410" height="696" viewBox="0 0 1410 696"><path d="M19.70 110.00 L25.08 112.64 L25.52 118.80 Z" fill="none" stroke="#7030a0" stroke-width="1" stroke-linejoin="round" opacity="0.85"/><path d="M25.08 112.64 L30.90 110.00 L25.52 118.80 Z" fill="#7030a0" stroke="#7030a0" stroke-width="0.9" stroke-linejoin="round"/><path d="M157.10 109.70 L163.00 112.52 L163.50 119.10 Z" fill="none" stroke="#ff00ff" stroke-width="1" stroke-linejoin="round" opacity="0.85"/><path d="M163.00 112.52 L169.40 109.70 L163.50 119.10 Z" fill="#ff00ff" stroke="#ff00ff" stroke-width="0.9" stroke-linejoin="round"/><path d="M665.7 163.6 L667.2 163.1 L669.1 168.3 L671.9 161.3" fill="none" stroke="#000" stroke-width="1.5" stroke-linejoin="miter"/><path d="M665.7 180.6 L667.2 180.1 L669.1 185.3 L671.9 178.3" fill="none" stroke="#000" stroke-width="1.5" stroke-linejoin="miter"/><path d="M665.7 197.6 L667.2 197.1 L669.1 202.3 L671.9 195.3" fill="none" stroke="#000" stroke-width="1.5" stroke-linejoin="miter"/><path d="M665.7 231.6 L667.2 231.1 L669.1 236.3 L671.9 229.3" fill="none" stroke="#000" stroke-width="1.5" stroke-linejoin="miter"/><path d="M157.10 245.70 L163.00 248.52 L163.50 255.10 Z" fill="none" stroke="#ff00ff" stroke-width="1" stroke-linejoin="round" opacity="0.85"/><path d="M163.00 248.52 L169.40 245.70 L163.50 255.10 Z" fill="#ff00ff" stroke="#ff00ff" stroke-width="0.9" stroke-linejoin="round"/><path d="M665.7 265.6 L667.2 265.1 L669.1 270.3 L671.9 263.3" fill="none" stroke="#000" stroke-width="1.5" stroke-linejoin="miter"/><path d="M665.7 282.6 L667.2 282.1 L669.1 287.3 L671.9 280.3" fill="none" stroke="#000" stroke-width="1.5" stroke-linejoin="miter"/><path d="M665.7 316.6 L667.2 316.1 L669.1 321.3 L671.9 314.3" fill="none" stroke="#000" stroke-width="1.5" stroke-linejoin="miter"/><path d="M665.7 333.6 L667.2 333.1 L669.1 338.3 L671.9 331.3" fill="none" stroke="#000" stroke-width="1.5" stroke-linejoin="miter"/><path d="M665.7 350.6 L667.2 350.1 L669.1 355.3 L671.9 348.3" fill="none" stroke="#000" stroke-width="1.5" stroke-linejoin="miter"/><path d="M157.10 364.70 L163.00 367.52 L163.50 374.10 Z" fill="none" stroke="#ff00ff" stroke-width="1" stroke-linejoin="round" opacity="0.85"/><path d="M163.00 367.52 L169.40 364.70 L163.50 374.10 Z" fill="#ff00ff" stroke="#ff00ff" stroke-width="0.9" stroke-linejoin="round"/><path d="M665.7 384.6 L667.2 384.1 L669.1 389.3 L671.9 382.3" fill="none" stroke="#000" stroke-width="1.5" stroke-linejoin="miter"/><path d="M665.7 401.6 L667.2 401.1 L669.1 406.3 L671.9 399.3" fill="none" stroke="#000" stroke-width="1.5" stroke-linejoin="miter"/><path d="M665.7 418.6 L667.2 418.1 L669.1 423.3 L671.9 416.3" fill="none" stroke="#000" stroke-width="1.5" stroke-linejoin="miter"/><path d="M157.10 483.70 L163.00 486.52 L163.50 493.10 Z" fill="none" stroke="#ff00ff" stroke-width="1" stroke-linejoin="round" opacity="0.85"/><path d="M163.00 486.52 L169.40 483.70 L163.50 493.10 Z" fill="#ff00ff" stroke="#ff00ff" stroke-width="0.9" stroke-linejoin="round"/><path d="M665.7 486.6 L667.2 486.1 L669.1 491.3 L671.9 484.3" fill="none" stroke="#000" stroke-width="1.5" stroke-linejoin="miter"/><path d="M665.7 503.6 L667.2 503.1 L669.1 508.3 L671.9 501.3" fill="none" stroke="#000" stroke-width="1.5" stroke-linejoin="miter"/><path d="M665.7 520.6 L667.2 520.1 L669.1 525.3 L671.9 518.3" fill="none" stroke="#000" stroke-width="1.5" stroke-linejoin="miter"/><path d="M665.7 537.6 L667.2 537.1 L669.1 542.3 L671.9 535.3" fill="none" stroke="#000" stroke-width="1.5" stroke-linejoin="miter"/><path d="M157.10 568.70 L163.00 571.52 L163.50 578.10 Z" fill="none" stroke="#ff00ff" stroke-width="1" stroke-linejoin="round" opacity="0.85"/><path d="M163.00 571.52 L169.40 568.70 L163.50 578.10 Z" fill="#ff00ff" stroke="#ff00ff" stroke-width="0.9" stroke-linejoin="round"/><path d="M665.7 571.6 L667.2 571.1 L669.1 576.3 L671.9 569.3" fill="none" stroke="#000" stroke-width="1.5" stroke-linejoin="miter"/><path d="M665.7 588.6 L667.2 588.1 L669.1 593.3 L671.9 586.3" fill="none" stroke="#000" stroke-width="1.5" stroke-linejoin="miter"/><path d="M54.15 621.20 L64.15 626.84 L57.25 626.95 Z" fill="none" stroke="#7030a0" stroke-width="1" stroke-linejoin="round" opacity="0.85"/><path d="M57.25 626.95 L64.15 626.84 L54.15 632.70 Z" fill="#7030a0" stroke="#7030a0" stroke-width="0.9" stroke-linejoin="round"/><path d="M53.20 639.70 L59.06 642.43 L59.54 648.80 Z" fill="none" stroke="#7030a0" stroke-width="1" stroke-linejoin="round" opacity="0.85"/><path d="M59.06 642.43 L65.40 639.70 L59.54 648.80 Z" fill="#7030a0" stroke="#7030a0" stroke-width="0.9" stroke-linejoin="round"/><path d="M196.10 621.20 L206.10 626.84 L199.20 626.95 Z" fill="none" stroke="#ff00ff" stroke-width="1" stroke-linejoin="round" opacity="0.85"/><path d="M199.20 626.95 L206.10 626.84 L196.10 632.70 Z" fill="#ff00ff" stroke="#ff00ff" stroke-width="0.9" stroke-linejoin="round"/><path d="M195.40 640.00 L201.11 642.64 L201.59 648.80 Z" fill="none" stroke="#ff00ff" stroke-width="1" stroke-linejoin="round" opacity="0.85"/><path d="M201.11 642.64 L207.30 640.00 L201.59 648.80 Z" fill="#ff00ff" stroke="#ff00ff" stroke-width="0.9" stroke-linejoin="round"/><path d="M335.7 625.3 L337.3 624.8 L338.9 630.3 L341.9 623.0" fill="none" stroke="#000" stroke-width="1.6"/><path d="M340.00 639.40 L341.20 642.72 L344.68 642.10 L342.40 644.80 L344.68 647.50 L341.20 646.88 L340.00 650.20 L338.80 646.88 L335.32 647.50 L337.60 644.80 L335.32 642.10 L338.80 642.72 Z" fill="#ff00ff"/><path d="M1006.2 632.4 L998.9 636.4 L1006.2 640.4" fill="none" stroke="#000" stroke-width="1.8" stroke-linejoin="miter" stroke-miterlimit="4"/><path d="M1015.2 632.4 L1007.9 636.4 L1015.2 640.4" fill="none" stroke="#000" stroke-width="1.8" stroke-linejoin="miter" stroke-miterlimit="4"/><path d="M1094.2 632.4 L1087.1 636.4 L1094.2 640.4" fill="none" stroke="#000" stroke-width="1.8" stroke-linejoin="miter" stroke-miterlimit="4"/><path d="M1256.2 632.4 L1263.2 636.4 L1256.2 640.4" fill="none" stroke="#000" stroke-width="1.8" stroke-linejoin="miter" stroke-miterlimit="4"/><path d="M1335.0 632.4 L1342.0 636.4 L1335.0 640.4" fill="none" stroke="#000" stroke-width="1.8" stroke-linejoin="miter" stroke-miterlimit="4"/><path d="M1344.0 632.4 L1351.0 636.4 L1344.0 640.4" fill="none" stroke="#000" stroke-width="1.8" stroke-linejoin="miter" stroke-miterlimit="4"/></svg>
</body></html>
